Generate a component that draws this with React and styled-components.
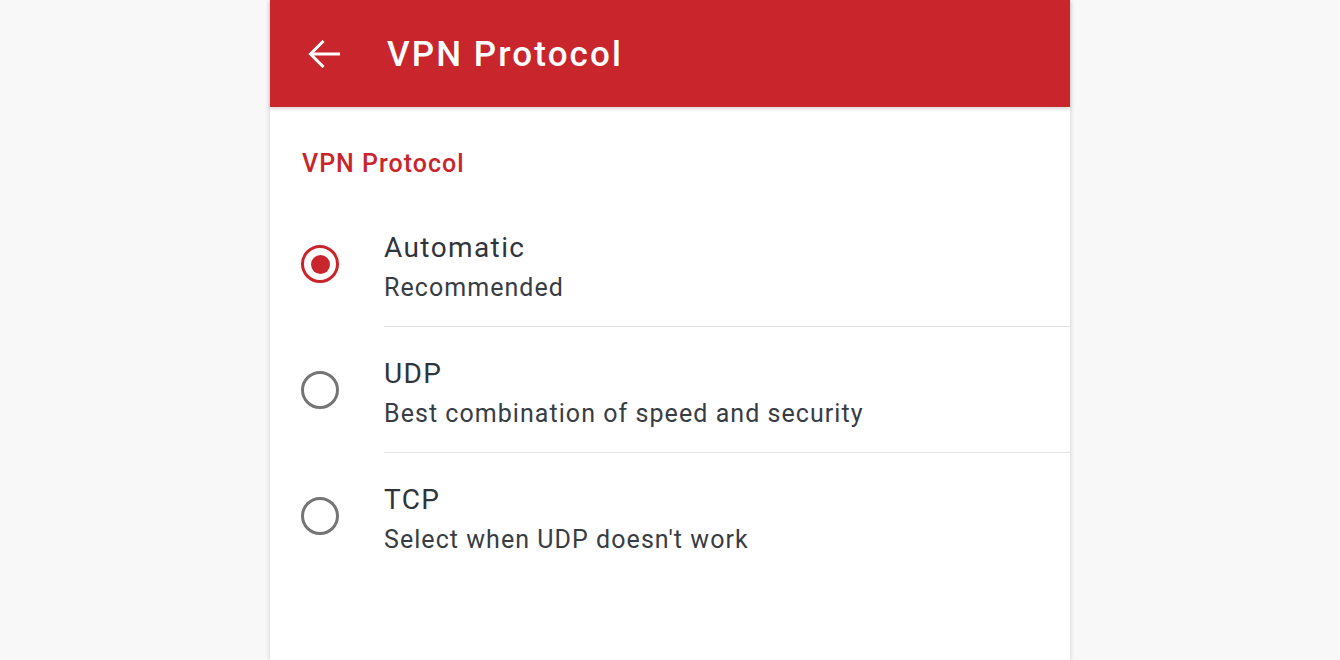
import React, { useState } from "react"
import styled, { createGlobalStyle } from "styled-components"

const GlobalStyle = createGlobalStyle`
  html, body {
    margin: 0;
    padding: 0;
    background: #f8f8f8;
    font-family: Roboto, "Noto Sans", Arial, sans-serif;
  }
`

const Page = styled.div`
  display: flex;
  justify-content: center;
  height: 660px;
  overflow: hidden;
`

const Panel = styled.section`
  width: 800px;
  height: 660px;
  background: #ffffff;
  box-shadow: 0 0 5px rgba(0, 0, 0, 0.18);
  display: flex;
  flex-direction: column;
`

const Header = styled.header`
  height: 107px;
  flex-shrink: 0;
  background: #c9252d;
  display: flex;
  align-items: center;
  padding-left: 38px;
  gap: 47px;
  box-shadow: 0 2px 4px rgba(0, 0, 0, 0.16);
  position: relative;
  z-index: 1;
`

const BackButton = styled.button`
  border: 0;
  background: none;
  padding: 0;
  display: flex;
  cursor: pointer;
`

const Title = styled.h1`
  margin: 0 0 -2px;
  color: #ffffff;
  font-size: 35px;
  font-weight: 500;
  letter-spacing: 2.1px;
`

const Content = styled.div`
  padding-top: 41px;
`

const SectionLabel = styled.h2`
  margin: 0 0 21px 32px;
  color: #c9252d;
  font-size: 25px;
  line-height: 32px;
  font-weight: 500;
  letter-spacing: 1px;
`

const Row = styled.label`
  display: flex;
  align-items: center;
  padding-left: 31px;
  cursor: pointer;
`

const Radio = styled.span`
  width: 38px;
  height: 38px;
  box-sizing: border-box;
  border-radius: 50%;
  border: 3px solid ${p => (p.$checked ? "#c9252d" : "#757575")};
  display: flex;
  align-items: center;
  justify-content: center;
  flex-shrink: 0;
  margin-right: 45px;

  &::after {
    content: "";
    width: 19px;
    height: 19px;
    border-radius: 50%;
    background: #c9252d;
    display: ${p => (p.$checked ? "block" : "none")};
  }
`

const TextBlock = styled.div`
  flex: 1;
  height: 126px;
  box-sizing: border-box;
  padding-top: 27px;
  border-bottom: ${p => (p.$last ? "1px solid transparent" : "1px solid #e3e3e3")};
`

const OptionTitle = styled.div`
  color: #30343b;
  font-size: 28px;
  line-height: 40px;
  letter-spacing: 1.4px;
`

const OptionSub = styled.div`
  color: #383c43;
  font-size: 25px;
  line-height: 40px;
  letter-spacing: 1.05px;
`

const options = [
  { id: "auto", title: "Automatic", sub: "Recommended" },
  { id: "udp", title: "UDP", sub: "Best combination of speed and security" },
  { id: "tcp", title: "TCP", sub: "Select when UDP doesn't work" },
]

function BackArrow() {
  return (
    <svg width="32" height="28" viewBox="0 0 32 28" fill="none">
      <path d="M2 14H32" stroke="#fff" strokeWidth="3" />
      <path d="M15.5 1L2.5 14L15.5 27" stroke="#fff" strokeWidth="3" />
    </svg>
  )
}

export default function App() {
  const [selected, setSelected] = useState("auto")
  return (
    <>
      <GlobalStyle />
      <Page>
        <Panel>
          <Header>
            <BackButton aria-label="Back">
              <BackArrow />
            </BackButton>
            <Title>VPN Protocol</Title>
          </Header>
          <Content>
            <SectionLabel>VPN Protocol</SectionLabel>
            {options.map((o, i) => (
              <Row key={o.id} onClick={() => setSelected(o.id)}>
                <Radio $checked={selected === o.id} />
                <TextBlock $last={i === options.length - 1}>
                  <OptionTitle>{o.title}</OptionTitle>
                  <OptionSub>{o.sub}</OptionSub>
                </TextBlock>
              </Row>
            ))}
          </Content>
        </Panel>
      </Page>
    </>
  )
}
